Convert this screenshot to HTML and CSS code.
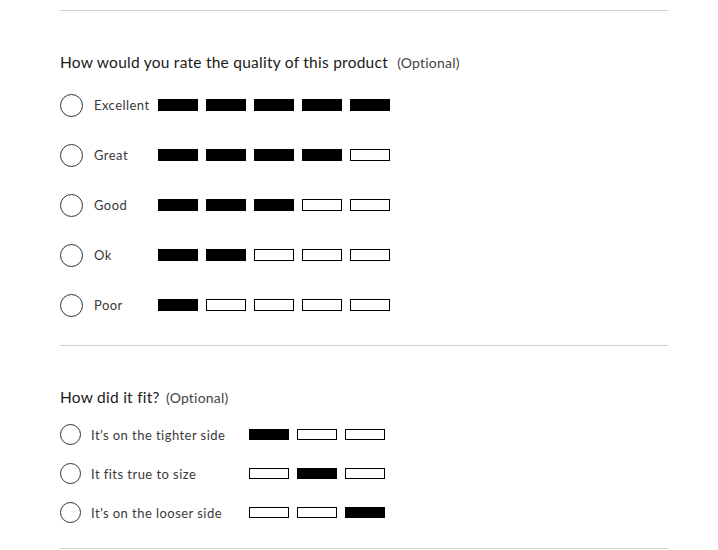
FILE: index.html
```html
<!DOCTYPE html>
<html>
<head>
<meta charset="utf-8">
<link rel="stylesheet" href="styles.css">
</head>
<body>
<div class="form">
  <section class="block">
    <h2 class="question">How would you rate the quality of this product <span class="opt wide">(Optional)</span></h2>
    <div class="options quality">
      <label class="row"><span class="radio"></span><span class="label">Excellent</span><span class="bars"><i class="bar on"></i><i class="bar on"></i><i class="bar on"></i><i class="bar on"></i><i class="bar on"></i></span></label>
      <label class="row"><span class="radio"></span><span class="label">Great</span><span class="bars"><i class="bar on"></i><i class="bar on"></i><i class="bar on"></i><i class="bar on"></i><i class="bar"></i></span></label>
      <label class="row"><span class="radio"></span><span class="label">Good</span><span class="bars"><i class="bar on"></i><i class="bar on"></i><i class="bar on"></i><i class="bar"></i><i class="bar"></i></span></label>
      <label class="row"><span class="radio"></span><span class="label">Ok</span><span class="bars"><i class="bar on"></i><i class="bar on"></i><i class="bar"></i><i class="bar"></i><i class="bar"></i></span></label>
      <label class="row"><span class="radio"></span><span class="label">Poor</span><span class="bars"><i class="bar on"></i><i class="bar"></i><i class="bar"></i><i class="bar"></i><i class="bar"></i></span></label>
    </div>
  </section>
  <section class="block">
    <h2 class="question">How did it fit? <span class="opt">(Optional)</span></h2>
    <div class="options fit">
      <label class="row"><span class="radio"></span><span class="label">It’s on the tighter side</span><span class="bars"><i class="bar on"></i><i class="bar"></i><i class="bar"></i></span></label>
      <label class="row"><span class="radio"></span><span class="label">It fits true to size</span><span class="bars"><i class="bar"></i><i class="bar on"></i><i class="bar"></i></span></label>
      <label class="row"><span class="radio"></span><span class="label">It’s on the looser side</span><span class="bars"><i class="bar"></i><i class="bar"></i><i class="bar on"></i></span></label>
    </div>
  </section>
  <div class="end"></div>
</div>
</body>
</html>
```
FILE: styles.css
```css
* { box-sizing: border-box; }
html, body { margin: 0; padding: 0; background: #fff; }
body {
  font-family: Lato, "Open Sans", sans-serif;
  color: #222;
}
.form {
  width: 608px;
  margin: 10px 0 0 60px;
}
.block {
  border-top: 1px solid #d2d2d2;
  padding: 41px 0 15px;
}
.block + .block { padding-bottom: 16px; }
.end { border-top: 1px solid #d2d2d2; }
.question {
  margin: 0 0 8px;
  height: 20px;
  font-size: 15.5px;
  line-height: 20px;
  font-weight: 400;
  color: #1a1a1a;
  letter-spacing: 0.25px;
  white-space: nowrap;
}
.opt {
  font-size: 14px;
  line-height: 1;
  color: #444;
  margin-left: 2px;
  letter-spacing: 0.2px;
}
.opt.wide { margin-left: 5px; }
.options { display: flex; flex-direction: column; }
.row {
  display: flex;
  align-items: center;
  height: 50px;
}
.fit .row { height: 39px; }
.radio {
  width: 23px;
  height: 23px;
  border: 1.3px solid #333;
  border-radius: 50%;
  flex: none;
}
.fit .radio { width: 21px; height: 21px; }
.label {
  margin-left: 11px;
  width: 64px;
  flex: none;
  font-size: 13px;
  color: #3a3a3a;
  letter-spacing: 0.45px;
}
.fit .label { margin-left: 10px; width: 158px; }
.bars { display: flex; gap: 8px; }
.bar {
  display: block;
  width: 40px;
  height: 12px;
  border: 1px solid #000;
  background: #fff;
}
.fit .bar { height: 11px; }
.bar.on { background: #000; }
```
